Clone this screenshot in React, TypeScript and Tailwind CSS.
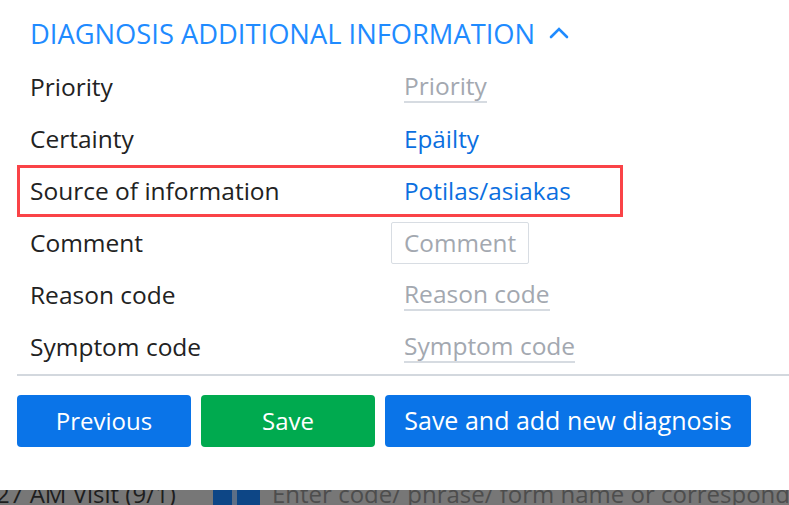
import React from "react";

const rows: { label: string; value: string; kind: "placeholder" | "value" | "box" }[] = [
  { label: "Priority", value: "Priority", kind: "placeholder" },
  { label: "Certainty", value: "Epäilty", kind: "value" },
  { label: "Source of information", value: "Potilas/asiakas", kind: "value" },
  { label: "Comment", value: "Comment", kind: "box" },
  { label: "Reason code", value: "Reason code", kind: "placeholder" },
  { label: "Symptom code", value: "Symptom code", kind: "placeholder" },
];

export default function App() {
  return (
    <div className="w-[789px] h-[505px] bg-white overflow-hidden flex flex-col font-['Open_Sans','Noto_Sans',sans-serif]">
      <div className="pl-[17px]">
        {/* Section heading */}
        <button className="h-[61px] pt-[8px] pl-[13px] flex items-center gap-[14px] text-[27.3px] text-[#1f8bff] cursor-pointer">
          DIAGNOSIS ADDITIONAL INFORMATION
          <svg width="20" height="12" viewBox="0 0 20 12" fill="none" className="mt-[-4px]">
            <path d="M2 10 L10 2 L18 10" stroke="#1f8bff" strokeWidth="2.6" strokeLinecap="round" />
          </svg>
        </button>

        {/* Rows */}
        <div className="flex flex-col">
          {rows.map((r) => (
            <div
              key={r.label}
              className={`w-[606px] h-[52px] flex items-center pl-[10px] border-[3px] ${
                r.label === "Source of information" ? "border-[#fa4347]" : "border-transparent"
              }`}
            >
              <div className="w-[374px] text-[24.5px] text-[#222]">{r.label}</div>
              {r.kind === "value" && <div className="text-[24.3px] text-[#0b6fdf]">{r.value}</div>}
              {r.kind === "placeholder" && (
                <div className="text-[24.5px] text-[#a3a8b0] border-b-2 border-[#d6dbe1] leading-[30px]">{r.value}</div>
              )}
              {r.kind === "box" && (
                <div className="-ml-[13px] h-[42px] px-[12px] flex items-center border border-[#d8dde3] rounded-[2px] text-[24.3px] text-[#a3a8b0]">
                  {r.value}
                </div>
              )}
            </div>
          ))}
        </div>

        <div className="mt-[1px] h-[2px] bg-[#d3d8de]" />

        {/* Actions */}
        <div className="mt-[19px] flex gap-[10px]">
          <button className="w-[174px] h-[52px] rounded-[4px] bg-[#0a74e8] text-white text-[24px] cursor-pointer">
            Previous
          </button>
          <button className="w-[174px] h-[52px] rounded-[4px] bg-[#00aa4f] text-white text-[24px] cursor-pointer">
            Save
          </button>
          <button className="w-[366px] h-[52px] rounded-[4px] bg-[#0a74e8] text-white text-[25px] cursor-pointer">
            Save and add new diagnosis
          </button>
        </div>
      </div>

      {/* Dimmed page behind the dialog */}
      <div className="mt-auto h-[15px] bg-[#777777] flex items-start overflow-hidden">
        <div className="shrink-0 -mt-[14px] -ml-[4px] w-[217px] text-[24px] text-[#1e1e1e] whitespace-nowrap">27 AM Visit (9/1)</div>
        <div className="shrink-0 flex h-full">
          <div className="w-[19px] bg-[#0d4686]" />
          <div className="w-[5px] bg-[#5d6f86]" />
          <div className="w-[23px] bg-[#0d4686]" />
        </div>
        <div className="shrink-0 -mt-[14px] ml-[12px] text-[24px] text-[#4d4d4d] whitespace-nowrap">
          Enter code/ phrase/ form name or correspondi...
        </div>
      </div>
    </div>
  );
}
